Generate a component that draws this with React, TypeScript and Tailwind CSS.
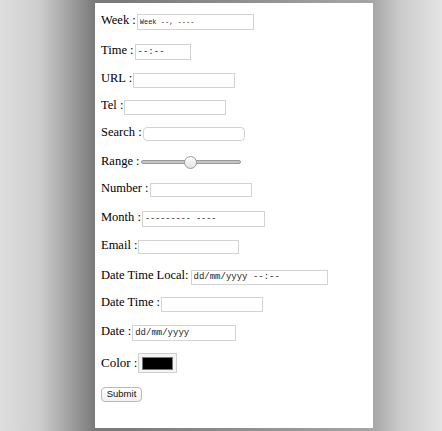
const serif = { fontFamily: '"Liberation Serif", "Times New Roman", serif' };

function Field({ w, h = 15, value = '', text = 'text-[9px]', round = false }: { w: string; h?: number; value?: string; text?: string; round?: boolean }) {
  return (
    <input
      readOnly
      defaultValue={value}
      className={`${w} ${text} ${round ? 'rounded-[4px]' : ''} box-border border border-[#d3d3d3] bg-white px-[2px] text-[#222] outline-none`}
      style={{ height: h, fontFamily: '"Liberation Mono", "Courier New", monospace' }}
    />
  );
}

export default function App() {
  return (
    <div className="min-h-[431px] w-full overflow-hidden bg-[linear-gradient(to_right,#dedede_0px,#cdcdcd_40px,#7a7a7a_95px,#7a7a7a_120px,#a6a6a6_373px,#cbcbcb_400px,#e4e4e4_442px)] pl-[95px] pt-[3px]">
      <form
        className="flex h-[425px] w-[278px] flex-col bg-white pl-[6px] pt-[9px] text-[12.5px] leading-none text-black"
        style={serif}
      >
        <div className="flex h-[20px] items-center gap-[1px]">
          <label className="pb-[4px]">Week :</label>
          <Field w="w-[117px]" h={16} value="Week --, ----" text="text-[7px]" />
        </div>
        <div className="mt-[10px] flex h-[20px] items-center gap-[1px]">
          <label className="pb-[4px]">Time :</label>
          <Field w="w-[56px]" h={16} value="--:--" />
        </div>
        <div className="mt-[8px] flex h-[20px] items-center gap-[1px]">
          <label className="pb-[4px]">URL :</label>
          <Field w="w-[102px]" />
        </div>
        <div className="mt-[7px] flex h-[20px] items-center gap-[1px]">
          <label className="pb-[4px]">Tel :</label>
          <Field w="w-[102px]" />
        </div>
        <div className="mt-[7px] flex h-[20px] items-center gap-[1px]">
          <label className="pb-[4px]">Search :</label>
          <Field w="w-[102px]" h={14} round />
        </div>
        <div className="mt-[8px] flex h-[20px] items-center gap-[1px]">
          <label className="pb-[2px]">Range :</label>
          <div className="relative flex h-[13px] w-[100px] items-center">
            <div className="h-[4px] w-full rounded-full border border-[#9a9a9a] bg-[#c4c4c4]" />
            <div className="absolute left-[43px] top-0 h-[13px] w-[13px] rounded-full border border-[#9d9d9d] bg-gradient-to-b from-white to-[#e4e4e4]" />
          </div>
        </div>
        <div className="mt-[8px] flex h-[20px] items-center gap-[1px]">
          <label className="pb-[4px]">Number :</label>
          <Field w="w-[102px]" h={14} />
        </div>
        <div className="mt-[9px] flex h-[20px] items-center gap-[1px]">
          <label className="pb-[4px]">Month :</label>
          <Field w="w-[123px]" h={16} value="--------- ----" text="text-[8.5px]" />
        </div>
        <div className="mt-[8px] flex h-[20px] items-center gap-[1px]">
          <label className="pb-[4px]">Email :</label>
          <Field w="w-[101px]" h={14} />
        </div>
        <div className="mt-[10px] flex h-[20px] items-center gap-[2px]">
          <label className="pb-[4px]">Date Time Local:</label>
          <Field w="w-[137px]" value="dd/mm/yyyy --:--" />
        </div>
        <div className="mt-[7px] flex h-[20px] items-center gap-[1px]">
          <label className="pb-[4px]">Date Time :</label>
          <Field w="w-[102px]" />
        </div>
        <div className="mt-[9px] flex h-[20px] items-center gap-[1px]">
          <label className="pb-[4px]">Date :</label>
          <Field w="w-[104px]" h={16} value="dd/mm/yyyy" />
        </div>
        <div className="mt-[10px] flex h-[20px] items-center gap-[1px]">
          <label className="pb-[1px] text-[13px]">Color :</label>
          <div className="flex h-[20px] w-[39px] items-center justify-center border border-[#cfcfcf] bg-[#f4f4f4]">
            <div className="h-[13px] w-[31px] border border-[#777] bg-black" />
          </div>
        </div>
        <div className="mt-[11px] flex h-[20px] items-center">
          <button
            type="button"
            className="h-[15px] w-[41px] rounded-[4px] border border-[#b9b9b9] bg-gradient-to-b from-white to-[#f1f1f1] text-[9.5px] leading-none text-[#111]"
            style={{ fontFamily: '"Liberation Sans", Arial, sans-serif' }}
          >
            Submit
          </button>
        </div>
      </form>
    </div>
  );
}
